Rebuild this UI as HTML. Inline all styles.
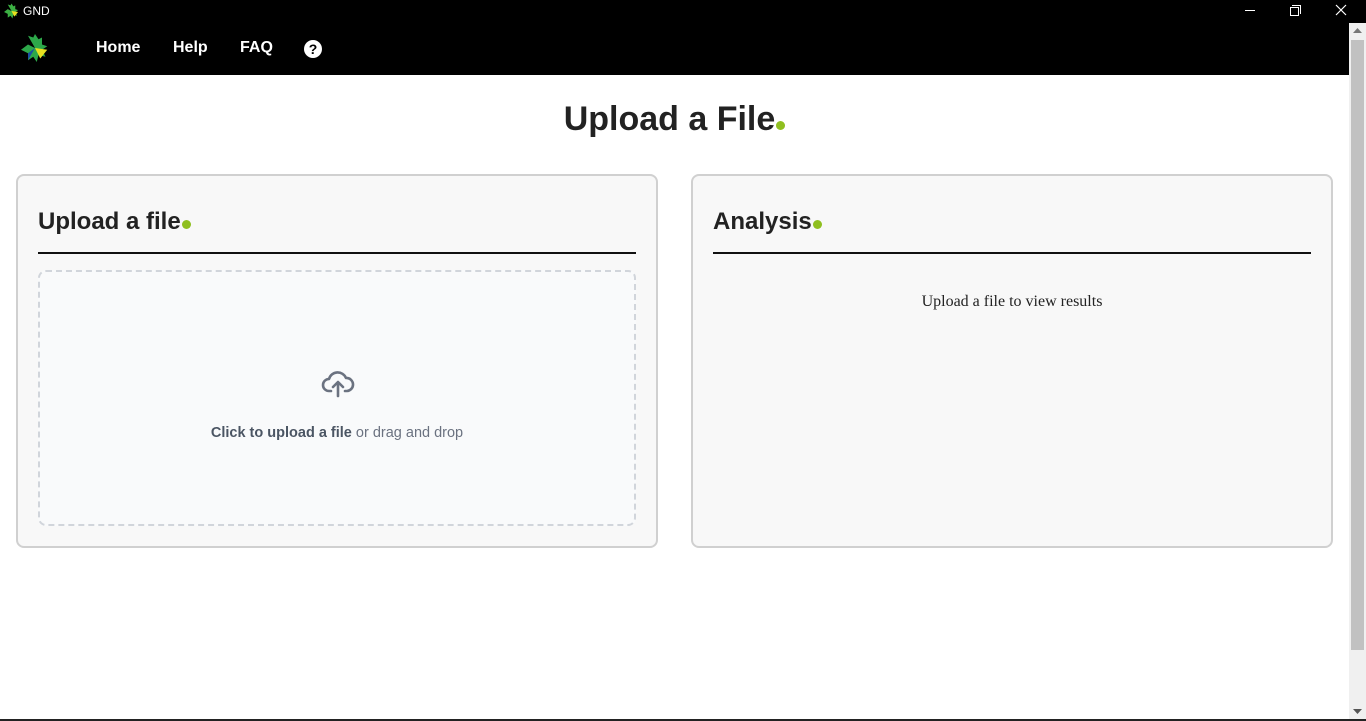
<!DOCTYPE html>
<html><head><style>
*{box-sizing:border-box;margin:0;padding:0}
body{width:1366px;height:721px;overflow:hidden;background:#fff;font-family:"Liberation Sans",sans-serif;position:relative}
.tb{position:absolute;left:0;top:0;width:1366px;height:23px;background:#000;color:#fff;font-size:12px}
.nav{position:absolute;left:0;top:23px;width:1349px;height:52px;background:#000}
.nav a{position:absolute;top:16px;color:#fff;font-weight:bold;font-size:16px;text-decoration:none}
.sb{position:absolute;left:1349px;top:23px;width:17px;height:697px;background:#f0f0f0}
.thumb{position:absolute;left:2px;top:17px;width:13px;height:610px;background:#c1c1c1}
.bot{position:absolute;left:0;top:719px;width:1366px;height:2px;background:#222}
h1{position:absolute;top:100px;left:0;width:1349px;text-align:center;font-size:34px;font-weight:bold;color:#222}
.dot{display:inline-block;width:9px;height:9px;border-radius:50%;background:#8fbf1f;margin-left:1px}
.card{position:absolute;top:174px;width:642px;height:374px;border:2px solid #d0d0d0;border-radius:8px;background:#f8f8f8}
.card h2{position:absolute;left:20px;top:32px;font-size:24px;font-weight:bold;color:#222}
.card .ln{position:absolute;left:20px;right:20px;top:76px;height:2px;background:#111}
.drop{position:absolute;left:20px;right:20px;top:94px;height:256px;border:2px dashed #d1d5db;border-radius:8px;background:#f9fafb;text-align:center}
</style></head><body>
<div class="tb">
<svg style="position:absolute;left:4px;top:3px" width="15" height="16" viewBox="0 0 16 16"><path d="M8 8L4 1L7 2L8 0L10 3L12 2L12 6L15 7L12 9L14 13L10 12L9 16L7 13L4 15L4 11L0 9L4 6Z" fill="#3cb043"/><path d="M8 8L15 9L11 14Z" fill="#e8e020"/></svg>
<span style="position:absolute;left:23px;top:4px">GND</span>
<span style="position:absolute;left:1245px;top:10px;width:10px;height:1px;background:#fff"></span>
<span style="position:absolute;left:1290px;top:7px;width:9px;height:9px;border:1px solid #fff"></span>
<span style="position:absolute;left:1292px;top:5px;width:9px;height:9px;border-top:1px solid #fff;border-right:1px solid #fff"></span>
<svg style="position:absolute;left:1335px;top:4px" width="12" height="12"><path d="M1 1L11 11M11 1L1 11" stroke="#fff" stroke-width="1.2"/></svg>
</div>
<div class="nav">
<svg style="position:absolute;left:21px;top:10px" width="28" height="30" viewBox="0 0 16 16"><path d="M8 8L4 1L7 2L8 0L10 3L12 2L12 6L15 7L12 9L14 13L10 12L9 16L7 13L4 15L4 11L0 9L4 6Z" fill="#2da84a"/><path d="M8 8L15 9L11 14Z" fill="#e8e020"/><path d="M8 8L4 15L4 11Z" fill="#1a4fa0"/></svg>
<a style="left:96px">Home</a><a style="left:173px">Help</a><a style="left:240px">FAQ</a>
<span style="position:absolute;left:304px;top:17px;width:18px;height:18px;border-radius:50%;background:#fff;color:#000;font-weight:bold;font-size:14px;text-align:center;line-height:18px">?</span>
</div>
<h1>Upload a File<span class="dot"></span></h1>
<div class="card" style="left:16px"><h2>Upload a file<span class="dot"></span></h2><div class="ln"></div>
<div class="drop">
<svg style="position:absolute;left:281px;top:98px" width="34" height="28" viewBox="0 0 34 28" fill="none" stroke="#6b7280" stroke-width="2.6" stroke-linecap="round" stroke-linejoin="round"><path d="M10 21H8a6 6 0 0 1 0-12a9 9 0 0 1 17-1a6.5 6.5 0 0 1 1 13h-2"/><path d="M17 26V12M12 17l5-5 5 5"/></svg>
<div style="position:absolute;left:0;right:0;top:153px;font-size:14.5px;color:#6b7280"><b style="color:#4b5563">Click to upload a file</b> or drag and drop</div>
</div></div>
<div class="card" style="left:691px"><h2>Analysis<span class="dot"></span></h2><div class="ln"></div>
<div style="position:absolute;left:0;right:0;top:117px;text-align:center;font-family:'Liberation Serif',serif;font-size:16px;color:#222">Upload a file to view results</div></div>
<div class="sb"><div class="thumb"></div>
<svg style="position:absolute;left:4px;top:5px" width="9" height="6"><path d="M0 5L4.5 0L9 5Z" fill="#777"/></svg>
<svg style="position:absolute;left:4px;top:686px" width="9" height="6"><path d="M0 0L4.5 5L9 0Z" fill="#555"/></svg></div>
<div class="bot"></div>
</body></html>
